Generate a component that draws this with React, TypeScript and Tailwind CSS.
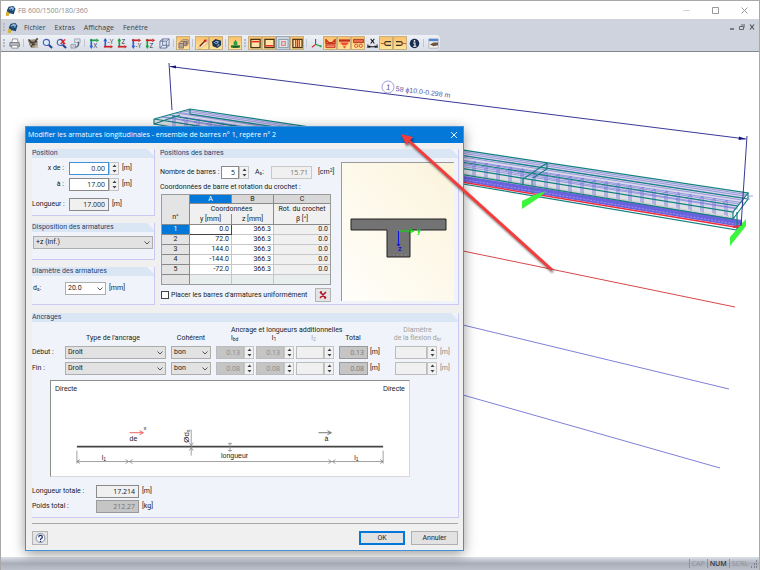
import React from 'react';

const coords = [
    { y: '0.0', z: '366.3', rot: '0.0' },
    { y: '72.0', z: '366.3', rot: '0.0' },
    { y: '144.0', z: '366.3', rot: '0.0' },
    { y: '-144.0', z: '366.3', rot: '0.0' },
    { y: '-72.0', z: '366.3', rot: '0.0' },
];

const anchors = [
    { label: 'Début :', type: 'Droit', bond: 'bon', lbd: '0.13', l1: '0.13', total: '0.13' },
    { label: 'Fin :', type: 'Droit', bond: 'bon', lbd: '0.08', l1: '0.08', total: '0.08' },
];

/* ---------- toolbar ---------- */

const Frame = ({ children }: { children: React.ReactNode }) => (
    <>
        <rect x="1" y="1.5" width="10" height="9" fill="#ffe3a8" stroke="#4a3418" strokeWidth="1.4" />
        {children}
    </>
);

const AxisIcon = ({ letter, flip, first, second }: { letter: string; flip: boolean; first: string; second: string }) => (
    <>
        <path d="M2.500 1v9" stroke={first} strokeWidth="1.800" />
        <path d={flip ? 'M1 9.500h7' : 'M1 2.500h7'} stroke={second} strokeWidth="1.800" />
        <path d={flip ? 'M8 7.500l3 2-3 2z' : 'M8 .5l3 2-3 2z'} fill={second} />
        <path d={flip ? 'M.5 3.500L2.500 0l2 3.500z' : 'M.5 8.500l2 3.500 2-3.500z'} fill={first} />
        <text x="5" y={flip ? 7 : 11} fontSize="7" fill="#1d3548">{letter}</text>
    </>
);

const icons: Record<string, React.ReactNode> = {
    print: (
        <>
            <path d="M3 5L4 1h5l1 4" fill="#fff" stroke="#777" strokeWidth=".8" />
            <path d="M1 5h10l.5 4H1z" fill="#b9bfc8" stroke="#555d68" strokeWidth=".8" />
            <path d="M3 8h6l1 3H3z" fill="#fff" stroke="#666" strokeWidth=".7" />
            <circle cx="9.500" cy="6.500" r=".8" fill="#e0a020" />
        </>
    ),
    render: (
        <>
            <path d="M1 2l9-1 1 9-7 1-3-4z" fill="#9c917f" />
            <path d="M1 2l9 8M10 1L3 10M2 5l8-1M1 1v3M9 1h2" stroke="#40372e" strokeWidth="1.200" />
            <path d="M7 8h4v3H8z" fill="#c5b9a4" />
        </>
    ),
    zoom: (
        <>
            <path d="M7 7l4 4" stroke="#27438e" strokeWidth="2.200" />
            <circle cx="4.800" cy="4.800" r="3.400" fill="#dcebfa" stroke="#4565b5" strokeWidth="1.300" />
        </>
    ),
    zoomx: (
        <>
            <path d="M7 7l4 4" stroke="#27438e" strokeWidth="2.200" />
            <circle cx="4.800" cy="4.800" r="3.400" fill="#dcebfa" stroke="#4565b5" strokeWidth="1.300" />
            <path d="M5 1.500l5 5M10 1.500l-5 5" stroke="#e02020" strokeWidth="1.500" />
        </>
    ),
    previous: (
        <>
            <path d="M1 7h5v4H1z" fill="#c6ccd6" stroke="#8d96a6" strokeWidth=".8" />
            <path d="M5 1h6v4H5z" fill="#dfe3ea" stroke="#8d96a6" strokeWidth=".8" />
            <path d="M9 4c1 3 0 6-3 6" fill="none" stroke="#56647b" strokeWidth="1.500" />
        </>
    ),
    viewX: <AxisIcon letter="X" flip={false} first="#2b62d0" second="#1ca040" />,
    viewYn: <AxisIcon letter="-Y" flip first="#2b62d0" second="#cc2222" />,
    viewZ: <AxisIcon letter="Z" flip first="#1ca040" second="#cc2222" />,
    viewY: <AxisIcon letter="-Y" flip={false} first="#2b62d0" second="#cc2222" />,
    viewZn: <AxisIcon letter="Z" flip={false} first="#1ca040" second="#cc2222" />,
    cube: <path d="M1 3.500l3-2.500h7v7L8 11H1zM1 3.500h7L11 1M8 3.500V11M4 1v7L1 11M4 8h7" fill="#e2e8f3" stroke="#5b6b92" strokeWidth=".9" />,
    blocks: (
        <>
            <path d="M1 6h5v5H1zM6 4h4v4H6z" fill="#b9a38e" stroke="#776a75" strokeWidth=".9" />
            <path d="M1 6l4-4h6v4L8 9M3 4h6v3" fill="none" stroke="#776a75" strokeWidth=".9" />
        </>
    ),
    redline: (
        <>
            <path d="M1 11L11 1v4L5 11z" fill="#fff0d8" stroke="#cda36a" strokeWidth=".7" />
            <path d="M3 9l6-6" stroke="#6b1b12" strokeWidth="1.300" />
            <circle cx="9" cy="3" r="1.500" fill="#d02018" />
        </>
    ),
    solid: (
        <>
            <path d="M1 4l4-3 6 2v5l-4 3-5-2z" fill="#1c3450" />
            <path d="M3 5l3-2 3 1-3 3zM7 8l2-2v2L7 9.500z" fill="#8fbbe0" />
            <path d="M4 5l2-1 1 1-1 1z" fill="#1c3450" />
        </>
    ),
    support: (
        <>
            <path d="M1 8h10v2.500H1z" fill="#1d7a35" />
            <path d="M4 8V5l2-3 2 3v3z" fill="#2c9c48" />
            <path d="M3 10h6" stroke="#0d421a" />
        </>
    ),
    topbar: <Frame><path d="M2 4h8" stroke="#e82a1c" strokeWidth="1.600" /></Frame>,
    botbar: <Frame><path d="M2 8.500h8" stroke="#e82a1c" strokeWidth="1.600" /></Frame>,
    stirrup: (
        <>
            <rect x="1" y="1.500" width="10" height="9" fill="#dce5ec" stroke="#8697a4" />
            <rect x="4" y="4" width="4" height="4" fill="none" stroke="#e88078" strokeWidth="1.300" />
        </>
    ),
    vbars: <Frame><path d="M4 2v8M6 2v8M8 2v8" stroke="#e82a1c" strokeWidth="1.300" /></Frame>,
    axes: (
        <>
            <path d="M5 1v6" stroke="#3a50c8" strokeWidth="1.200" />
            <path d="M5 7l6 2" stroke="#28a048" strokeWidth="1.300" />
            <path d="M5 7l-4 3" stroke="#d83030" strokeWidth="1.300" />
            <circle cx="10.500" cy="9" r="1.200" fill="#28a048" />
        </>
    ),
    load1: (
        <>
            <path d="M1 1v5h10V1M1 2l3 3h4l3-3" fill="none" stroke="#c8321f" strokeWidth="1.500" />
            <path d="M1 7.500h10v3H1z" fill="#f58a68" stroke="#c12b20" strokeWidth=".9" />
        </>
    ),
    load2: (
        <>
            <path d="M0 1.500h12v2.500H0z" fill="#c12b20" />
            <path d="M1 5h10L8 8H4z" fill="#ec4b36" />
            <path d="M4 9h4l-2 2.500z" fill="#ec4b36" />
        </>
    ),
    load3: (
        <>
            <path d="M.5 1.500h11V5H.5z" fill="#ec6a4d" stroke="#a63a22" strokeWidth="1" />
            <circle cx="3.500" cy="8.500" r="1.800" fill="none" stroke="#d04a30" />
            <circle cx="8.500" cy="8.500" r="1.800" fill="none" stroke="#d04a30" />
        </>
    ),
    dimension: (
        <>
            <path d="M4 1l4 5M8 1L4 6M5 3.500h2M1 7v4M11 7v4M1 9.500h10" stroke="#15151c" strokeWidth="1.100" />
            <path d="M1 9.500l2.500-1.500v3zM11 9.500L8.500 8v3z" fill="#15151c" />
        </>
    ),
    hookL: (
        <>
            <path d="M11 4H6a2 2 0 000 4h5" fill="none" stroke="#3d3327" strokeWidth="1.300" />
            <path d="M0 6h4" stroke="#e04428" />
        </>
    ),
    hookR: (
        <>
            <path d="M1 4h5a2 2 0 010 4H1" fill="none" stroke="#3d3327" strokeWidth="1.300" />
            <path d="M8 6h4" stroke="#e04428" />
        </>
    ),
    info: (
        <>
            <circle cx="6" cy="6" r="5.200" fill="#16294f" />
            <circle cx="6" cy="3.200" r="1" fill="#fff" />
            <path d="M4.500 5.500H6.500V9M4.500 9h3.500" stroke="#fff" strokeWidth="1.200" fill="none" />
        </>
    ),
    panel: (
        <>
            <rect x="1" y="1" width="10" height="10" fill="#f5f2ea" stroke="#8a94a6" strokeWidth=".6" />
            <path d="M1 1h10v2.500H1z" fill="#4f86dd" />
            <path d="M2 7l4-2h5v3l-5 1z" fill="#6d5443" />
        </>
    ),
};

const toolbar: { id: string; title: string; on?: 'warm' | 'cool' }[][] = [
    [{ id: 'print', title: 'Imprimer' }],
    [
        { id: 'render', title: 'Rendu' },
        { id: 'zoom', title: 'Zoom' },
        { id: 'zoomx', title: 'Zoom complet' },
        { id: 'previous', title: 'Vue précédente' },
    ],
    [
        { id: 'viewX', title: 'Vue X' },
        { id: 'viewYn', title: 'Vue -Y' },
        { id: 'viewZ', title: 'Vue Z' },
        { id: 'viewY', title: 'Vue Y' },
        { id: 'viewZn', title: 'Vue -Z' },
        { id: 'cube', title: 'Isométrie' },
    ],
    [{ id: 'blocks', title: 'Transparence', on: 'warm' }],
    [
        { id: 'redline', title: 'Armatures', on: 'warm' },
        { id: 'solid', title: 'Solide', on: 'warm' },
    ],
    [{ id: 'support', title: 'Appuis', on: 'warm' }],
];

const toolbarRight: typeof toolbar = [
    [
        { id: 'topbar', title: 'Armature supérieure', on: 'warm' },
        { id: 'botbar', title: 'Armature inférieure', on: 'warm' },
        { id: 'stirrup', title: 'Cadres', on: 'cool' },
        { id: 'vbars', title: 'Étriers', on: 'warm' },
    ],
    [
        { id: 'axes', title: 'Axes' },
        { id: 'load1', title: 'Enveloppe', on: 'warm' },
        { id: 'load2', title: 'Répartition', on: 'warm' },
        { id: 'load3', title: 'Sections', on: 'warm' },
        { id: 'dimension', title: 'Cotes' },
        { id: 'hookL', title: 'Crochet gauche', on: 'warm' },
        { id: 'hookR', title: 'Crochet droit', on: 'warm' },
        { id: 'info', title: 'Information' },
    ],
    [{ id: 'panel', title: 'Panneau' }],
];

const tone = {
    warm: 'bg-gradient-to-b from-[#fbc06a] to-[#ffe596] border-[#c9b083]',
    cool: 'bg-[#cfd8e0] border-[#9aa9b5]',
    none: 'border-transparent',
};

const ToolGroups = ({ groups }: { groups: typeof toolbar }) => (
    <div className="flex items-center">
        <div className="mx-[2px] h-2 border-l-2 border-dotted border-[#b4bac6]" />
        {groups.map((group, i) => (
            <div key={i} className="flex items-center">
                {i > 0 && <div className="mx-[2px] h-2 w-px bg-[#c0c6d0]" />}
                {group.map((t) => (
                    <button key={t.id} type="button" title={t.title} className={`flex h-[14px] w-[14px] items-center justify-center border ${tone[t.on ?? 'none']}`}>
                        <svg viewBox="0 0 12 12" className="h-[11px] w-[11px]">{icons[t.id]}</svg>
                    </button>
                ))}
            </div>
        ))}
    </div>
);

const Logo = () => (
    <svg viewBox="0 0 12 12" className="h-[11px] w-[11px]">
        <path d="M2 6l2-4 5-1 2.500 3-2 6-4-1-3 1z" fill="#1d4670" />
        <path d="M4 4l3-2 3 1-1 3-3 0z" fill="#8fb7dc" />
        <path d="M5 5l3-1-1 3z" fill="#1d4670" />
        <path d="M1 8l2-1 2 2-1 3H1z" fill="#d9b23a" />
    </svg>
);

/* ---------- form pieces ---------- */

const Group = ({ title, className = '', children }: { title: string; className?: string; children: React.ReactNode }) => (
    <fieldset className={`flex min-w-0 flex-col border-r border-b border-[#c9c9f3] bg-[#f0f4fa] ${className}`}>
        <legend className="contents">
            <span className="block h-[9px] bg-[#dbe6f4] text-[7px] leading-[9px] text-[#23436f] [clip-path:polygon(0_0,calc(100%-7px)_0,100%_7px,100%_100%,0_100%)]">{title}</span>
        </legend>
        {children}
    </fieldset>
);

const Field = ({ id, label, value = '', className = '', disabled = false, readOnly = false }: { id?: string; label?: string; value?: string; className?: string; disabled?: boolean; readOnly?: boolean }) => (
    <input
        id={id}
        aria-label={label}
        defaultValue={value}
        disabled={disabled}
        readOnly={readOnly}
        className={`min-w-0 border px-[3px] text-right font-['Open_Sans','Noto_Sans',sans-serif] text-[7px] leading-[10px] outline-none ${className}`}
    />
);

const Spin = ({ label }: { label: string }) => (
    <span className="flex w-[10px] flex-col border border-[#c4c4c4] bg-[#f2f2f2]">
        <button type="button" aria-label={`${label} plus`} className="flex flex-1 items-center justify-center">
            <svg viewBox="0 0 5 3" className="h-[3px] w-[5px]"><path d="M.5 3l2-2.500 2 2.500z" fill="#444" /></svg>
        </button>
        <button type="button" aria-label={`${label} moins`} className="flex flex-1 items-center justify-center">
            <svg viewBox="0 0 5 3" className="h-[3px] w-[5px]"><path d="M.5 0l2 2.500 2-2.500z" fill="#444" /></svg>
        </button>
    </span>
);

const Select = ({ id, label, value, className }: { id?: string; label?: string; value: string; className: string }) => (
    <div className={`relative h-[13px] ${className}`}>
        <select id={id} aria-label={label} defaultValue={value} className="block h-full w-full appearance-none border border-[#adadad] bg-inherit pl-[2px] text-[7px] leading-[11px] outline-none">
            <option>{value}</option>
        </select>
        <svg viewBox="0 0 6 4" className="pointer-events-none absolute top-[5px] right-[3px] h-[4px] w-[6px]">
            <path d="M.5.5L3 3 5.500.500" fill="none" stroke="#444" strokeWidth=".9" />
        </svg>
    </div>
);

const SpinField = ({ label, value = '', width, grey = false }: { label: string; value?: string; width: string; grey?: boolean }) => (
    <div className={`flex h-[13px] ${width}`}>
        <Field label={label} value={value} disabled className={`flex-1 border-[#bcbcbc] text-[#8a8a8a] ${grey ? 'bg-[#c5c5c5]' : 'bg-[#f0f0f0]'}`} />
        <Spin label={label} />
    </div>
);

/* ---------- drawings ---------- */

const along = (x: number, x1: number, y1: number, x2: number, y2: number) => y1 + ((x - x1) * (y2 - y1)) / (x2 - x1);

const Model = () => {
    const stirrups = Array.from({ length: 47 }, (_, i) => 175 + i * 12);
    return (
        <svg viewBox="1 52 758 503" preserveAspectRatio="xMinYMin meet" className="block w-full" role="img" aria-label="Modèle 3D de la poutre">
            <polygon points="154,119 190,109 748,193 733,212" fill="#d9d9e8" />
            <polygon points="154,119 733,212 733,219 154,124" fill="#dedee6" />
            <polygon points="190,135 733,219 737,222 463,178 190,133" fill="#c9c9cc" />
            <polygon points="300,146 733,217 740,223 300,153" fill="#cfcfd0" />
            <polygon points="300,150 742,220 741,227 300,155" fill="#6a62dc" />
            <path d="M300 152.500L741 225" stroke="#a49cf4" strokeWidth=".8" strokeDasharray="2 1.500" />
            <path d="M300 155.500L741 228" stroke="#ee2c3c" strokeWidth="1.500" />
            <g stroke="#6b6bd6" strokeWidth=".6">
                <path d="M187 110L747 194.500M183 111L745 196M180 112.500L744 198M176 113L742 200M169 115L739 204M165 117L737 206M162 117L736 208" />
                <path d="M180 117L744 203M168 121L738 209" />
            </g>
            <g stroke="#7272da" strokeWidth=".8" fill="none">
                {stirrups.map((x) => {
                    const top = along(x, 154, 112, 740, 202);
                    return <path key={x} d={`M${x - 5} ${top + 4}l5-4v16M${x - 2} ${top + 4}v11`} />;
                })}
            </g>
            <g stroke="#128080" strokeWidth="1.200" fill="none">
                <path d="M154 119L190 109L748 193L733 212Z" />
                <path d="M154 119V124L733 219V212M748 193V199L733 219" />
                <path d="M190 109V114L748 199M172 116L738 206" />
                <path d="M547 163L523 179V185M547 163V169L533 178M154 124L180 115" />
                <path d="M463 184L737 230V212" />
            </g>
            <path d="M737 230l5-8" stroke="#5a2ab0" />
            <path d="M733 227l9-1" stroke="#ee2c3c" strokeWidth="2" />
            <path d="M748 196h5M746 199h4" stroke="#8a8ae0" strokeWidth=".8" />
            <path d="M532 180v14" stroke="#4a7a90" />
            <polygon points="522,201 534,195 546,191 540,197 522,209" fill="#3df53d" />
            <polygon points="730,237 746,219 746,226 730,246" fill="#3df53d" />

            <g stroke="#23238c" strokeWidth=".9" fill="none">
                <path d="M170 66.500L746 139" />
                <path d="M169 63L172 110M747 136L741 226" />
            </g>
            <path d="M170 66.500l6-1v3zM746 139l-7-2.500-.5 3.500z" fill="#15157c" />
            <g transform="translate(388 87) rotate(7)" fontFamily="Liberation Sans" fill="#5454a8" fontSize="8">
                <circle r="6" fill="#fff" stroke="#8a8ad0" strokeWidth=".8" />
                <text x="-2" y="3">1</text>
                <text x="8" y="3" fontSize="7">58 ϕ10.0-0.298 m</text>
            </g>

            <path d="M463 251L735 307" stroke="#d84848" strokeWidth="1" />
            <path d="M463 325L729 389M463 395L720 468" stroke="#8080d8" strokeWidth="1" />
        </svg>
    );
};

const Section = () => (
    <svg viewBox="0 0 112 138" className="h-full w-full" role="img" aria-label="Section en T">
        <defs>
            <linearGradient id="cream" x1="1" y1="0" x2="0" y2="1">
                <stop offset="0" stopColor="#fbf4dc" />
                <stop offset="1" stopColor="#fffefa" />
            </linearGradient>
        </defs>
        <rect width="112" height="138" fill="url(#cream)" />
        <path d="M9 56H104V67H68V94H45V67H9Z" fill="#737373" stroke="#222" />
        <path d="M47 92H67" stroke="#8888ee" strokeDasharray="1 3" />
        <path d="M57 68H71M68 66l4 2-4 2" stroke="#00e800" fill="none" />
        <path d="M56.500 68V83M55 81l1.500 2 1.500-2" stroke="#1414e0" fill="none" />
        <text x="75" y="70" fontSize="7" fontWeight="bold" fill="#00e800">y</text>
        <text x="56" y="88" fontSize="7" fontWeight="bold" fill="#1414e0">z</text>
    </svg>
);

const AnchorSketch = () => (
    <svg viewBox="0 0 360 96" className="block w-full" fontSize="7" fill="#1a1a1a" fontFamily="Liberation Sans" role="img" aria-label="Schéma des ancrages">
        <text x="4" y="10">Directe</text>
        <text x="356" y="10" textAnchor="end">Directe</text>
        <path d="M26 66H334" stroke="#454545" strokeWidth="2" />
        <g stroke="#888" strokeWidth=".8" fill="none">
            <path d="M26 81H334M26 70V83M334 70V83" />
            <path d="M29 79l-3 2 3 2M75 79l3 2-3 2M82 79l-3 2 3 2M279 79l3 2-3 2M286 79l-3 2 3 2M331 79l3 2-3 2" />
            <path d="M141 49V75M139 62l2 3 2-3M139 70l2-3 2 3M180 62V71M178 63h4M178 70h4" />
        </g>
        <path d="M79 52H92M89 50l4 2-4 2" stroke="#f06060" fill="none" />
        <path d="M269 52H281M278 50l4 2-4 2" stroke="#555" fill="none" strokeWidth=".8" />
        <text x="93" y="49" fontSize="6">x</text>
        <text x="79" y="60">de</text>
        <text x="275" y="60">à</text>
        <text x="51" y="79">l<tspan fontSize="5" dy="1">1</tspan></text>
        <text x="305" y="79">l<tspan fontSize="5" dy="1">1</tspan></text>
        <text x="171" y="77">longueur</text>
        <text transform="translate(139 62) rotate(-90)" fontSize="8">Ød<tspan fontSize="5" dy="1">s</tspan></text>
    </svg>
);

/* ---------- dialog ---------- */

const Dialog = () => (
    <form className="absolute top-[74px] left-[24px] flex w-[439px] flex-col border border-[#3f92d6] bg-[#f0f0f0] font-[Roboto,'Noto_Sans',sans-serif] shadow-[0_3px_12px_rgba(0,0,0,0.4)]" onSubmit={(e) => e.preventDefault()}>
        <header className="flex h-4 items-center justify-between bg-[#0378d8] pr-[5px] pl-[2px] text-white">
            <h1 className="font-['Open_Sans','Noto_Sans',sans-serif] text-[7px] leading-[10px]">Modifier les armatures longitudinales - ensemble de barres n° 1, repère n° 2</h1>
            <button type="button" aria-label="Fermer">
                <svg viewBox="0 0 8 8" className="h-2 w-2"><path d="M1 1l6 6M7 1L1 7" stroke="#fff" strokeWidth=".9" /></svg>
            </button>
        </header>

        <div className="flex flex-col gap-2 pt-[6px] pr-[4px] pl-[6px]">
            <div className="flex gap-[5px]">
                {/* Left column */}
                <div className="flex w-[123px] flex-col gap-[7px]">
                    <Group title="Position">
                        <div className="grid grid-cols-[37px_40px_auto_1fr] items-center pt-1 pb-[4px]">
                            <label htmlFor="x-from" className="pr-[5px] text-right">x de :</label>
                            <Field id="x-from" value="0.00" className="h-[13px] border-[#3f92d6] bg-white" />
                            <div className="flex h-[13px]"><Spin label="x de" /></div>
                            <span className="pl-[3px]">[m]</span>
                            <label htmlFor="x-to" className="mt-[3px] pr-[5px] text-right">à :</label>
                            <Field id="x-to" value="17.00" className="mt-[3px] h-[13px] border-[#8a8a8a] bg-white" />
                            <div className="mt-[3px] flex h-[13px]"><Spin label="à" /></div>
                            <span className="mt-[3px] pl-[3px]">[m]</span>
                            <label htmlFor="length" className="mt-[7px] whitespace-nowrap">Longueur :</label>
                            <Field id="length" value="17.000" readOnly className="mt-[7px] h-[13px] border-[#8a8a8a] bg-[#f0f0f0]" />
                            <span className="col-span-2 mt-[7px] pl-[3px]">[m]</span>
                        </div>
                    </Group>
                    <Group title="Disposition des armatures">
                        <Select label="Disposition des armatures" value="+z (inf.)" className="mx-[1px] mt-1 mb-[10px] bg-[#e2e2e2]" />
                    </Group>
                    <Group title="Diamètre des armatures">
                        <div className="flex items-center pt-[6px] pb-[9px]">
                            <label htmlFor="diameter" className="w-[33px] pl-[1px]">d<sub className="text-[5px]">s</sub>:</label>
                            <Select id="diameter" value="20.0" className="w-[41px] bg-white" />
                            <span className="pl-[3px]">[mm]</span>
                        </div>
                    </Group>
                </div>

                {/* Bar positions */}
                <Group title="Positions des barres" className="flex-1">
                    <div className="flex flex-1 justify-between pt-1 pr-[4px] pb-[2px]">
                        <div className="flex w-[177px] flex-col pt-1">
                            <div className="flex h-[13px] items-center">
                                <label htmlFor="bar-count" className="w-[61px] whitespace-nowrap">Nombre de barres :</label>
                                <Field id="bar-count" value="5" className="h-full w-[18px] border-[#8a8a8a] bg-white" />
                                <div className="flex h-full"><Spin label="Nombre" /></div>
                                <label htmlFor="area" className="w-[22px] pl-[6px]">A<sub className="text-[5px]">s</sub>:</label>
                                <Field id="area" value="15.71" disabled className="h-full w-[41px] border-[#c8c8c8] bg-[#f0f0f0] text-[#777]" />
                                <span className="pl-[6px]">[cm<sup className="text-[5px]">2</sup>]</span>
                            </div>
                            <p className="mt-[4px] mb-[2px] whitespace-nowrap">Coordonnées de barre et rotation du crochet :</p>
                            <table className="ml-[1px] w-[170px] table-fixed border-separate border-spacing-0 border border-[#9a9a9a] bg-white text-[7px] leading-[9px]">
                                <colgroup>
                                    <col className="w-[28px]" />
                                    <col className="w-[42px]" />
                                    <col className="w-[42px]" />
                                    <col />
                                </colgroup>
                                <thead className="bg-[#f0f0f0]">
                                    <tr className="leading-[8px]">
                                        <th rowSpan={3} className="border-r border-b border-[#8a8a8a] bg-[#e4e4e4] pb-[3px] align-bottom font-normal">n°</th>
                                        <th className="border-r border-b border-[#8a8a8a] bg-[#0378d8] font-normal text-white">A</th>
                                        <th className="border-r border-b border-[#8a8a8a] bg-[#d8d8d8] font-normal">B</th>
                                        <th className="border-b border-[#8a8a8a] bg-[#d8d8d8] font-normal">C</th>
                                    </tr>
                                    <tr className="leading-[10px] whitespace-nowrap">
                                        <th colSpan={2} className="border-r border-[#8a8a8a] font-normal">Coordonnées</th>
                                        <th className="font-normal">Rot. du crochet</th>
                                    </tr>
                                    <tr className="leading-[10px]">
                                        <th className="border-r border-b border-[#8a8a8a] font-normal">y [mm]</th>
                                        <th className="border-r border-b border-[#8a8a8a] font-normal">z [mm]</th>
                                        <th className="border-b border-[#8a8a8a] font-normal">β [°]</th>
                                    </tr>
                                </thead>
                                <tbody>
                                    {coords.map((c, i) => (
                                        <tr key={i} className="text-right">
                                            <th className={`border-r border-b border-[#8a8a8a] text-center font-normal ${i === 0 ? 'bg-[#0378d8] text-white' : 'bg-[#e4e4e4]'}`}>{i + 1}</th>
                                            <td className={`border-r border-b pr-[2px] ${i === 0 ? 'border-[#444]' : 'border-[#c6c6c6]'}`}>{c.y}</td>
                                            <td className="border-r border-b border-[#c6c6c6] pr-[2px]">{c.z}</td>
                                            <td className="border-b border-[#c6c6c6] bg-[#f0f0f0] pr-[2px]">{c.rot}</td>
                                        </tr>
                                    ))}
                                    <tr className="h-[9px] bg-[#e8eeee]">
                                        <td className="border-r border-[#8a8a8a] bg-[#e4e4e4]" />
                                        <td className="border-r border-[#c6c6c6]" />
                                        <td className="border-r border-[#c6c6c6]" />
                                        <td />
                                    </tr>
                                </tbody>
                            </table>
                            <div className="mt-[3px] flex items-center justify-between pr-[6px]">
                                <label className="flex items-center gap-[2px] whitespace-nowrap">
                                    <input type="checkbox" className="ml-[1px] h-2 w-2 appearance-none border border-[#444] bg-white" />
                                    Placer les barres d'armatures uniformément
                                </label>
                                <button type="button" aria-label="Supprimer" className="flex h-[14px] w-4 items-center justify-center border border-[#b4b4b4] bg-[#e4e4e4]">
                                    <svg viewBox="0 0 8 8" className="h-2 w-2"><path d="M1 1l6 6M7 1L1 7M1 1h2M5 7h2" stroke="#b01c2c" strokeWidth="1.700" /></svg>
                                </button>
                            </div>
                        </div>
                        <div className="h-[139px] w-[113px] border-t border-l border-[#9a9a9a]"><Section /></div>
                    </div>
                </Group>
            </div>

            {/* Anchorage */}
            <Group title="Ancrages">
                <div className="pt-[4px] pb-[4px]">
                    <div className="grid grid-cols-[33px_106px_45px_40px_40px_43px_31px_25px_45px_1fr] items-center leading-[8px] whitespace-nowrap">
                        <span className="col-start-4 col-end-7 pl-[15px]">Ancrage et longueurs additionnelles</span>
                        <span className="col-start-9 text-center text-[#a0a0a0]">Diamètre</span>
                        <span className="col-start-2 pr-[10px] text-center">Type de l'ancrage</span>
                        <span className="pr-[5px] text-center">Cohérent</span>
                        <span className="pl-[15px]">l<sub className="text-[5px] leading-none">bd</sub></span>
                        <span className="pr-1 text-center">l<sub className="text-[5px] leading-none">1</sub></span>
                        <span className="pr-2 text-center text-[#a0a0a0]">l<sub className="text-[5px] leading-none">2</sub></span>
                        <span className="pr-[3px] text-center">Total</span>
                        <span className="col-start-9 flex justify-center text-[#a0a0a0]"><span>de la flexion d<sub className="text-[5px] leading-none">br</sub></span></span>
                    </div>
                    <div className="mt-[4px] flex flex-col gap-[3px]">
                        {anchors.map((a) => (
                            <div key={a.label} className="grid grid-cols-[33px_106px_45px_40px_40px_43px_31px_25px_45px_1fr] items-center">
                                <span>{a.label}</span>
                                <Select label={`${a.label} type de l'ancrage`} value={a.type} className="w-[101px] bg-[#e2e2e2]" />
                                <Select label={`${a.label} cohérent`} value={a.bond} className="w-[40px] bg-[#e2e2e2]" />
                                <SpinField label={`${a.label} lbd`} value={a.lbd} width="w-[38px]" grey />
                                <SpinField label={`${a.label} l1`} value={a.l1} width="w-[38px]" grey />
                                <SpinField label={`${a.label} l2`} width="w-[38px]" />
                                <Field label={`${a.label} total`} value={a.total} disabled className="h-[13px] w-[29px] border-[#9a9a9a] bg-[#c5c5c5] text-[#777]" />
                                <span>[m]</span>
                                <SpinField label={`${a.label} diamètre de la flexion`} width="w-[42px]" />
                                <span className="text-[#888]">[m]</span>
                            </div>
                        ))}
                    </div>
                    <div className="mt-[5px] mr-12 ml-[18px] border border-t-[#8a8f8a] border-r-[#d8d8d8] border-b-[#d8d8d8] border-l-[#8a8f8a] bg-white">
                        <AnchorSketch />
                    </div>
                    <div className="mt-2 grid grid-cols-[64px_43px_auto] items-center gap-y-[2px]">
                        <label htmlFor="total-length">Longueur totale :</label>
                        <Field id="total-length" value="17.214" readOnly className="h-[13px] border-[#8a8a8a] bg-[#f0f0f0]" />
                        <span className="pl-[3px]">[m]</span>
                        <label htmlFor="total-weight">Poids total :</label>
                        <Field id="total-weight" value="212.27" disabled className="h-[13px] border-[#9a9a9a] bg-[#c5c5c5] text-[#777]" />
                        <span className="pl-[3px]">[kg]</span>
                    </div>
                </div>
            </Group>
        </div>

        <footer className="mr-[5px] ml-[6px] mt-[5px] flex items-center gap-[6px] border-t border-[#a8a8a8] pt-[7px] pb-[5px]">
            <button type="button" aria-label="Aide" className="mr-auto flex h-[14px] w-4 items-center justify-center border border-[#b4b4b4] bg-[#e4e4e4]">
                <svg viewBox="0 0 12 12" className="h-[11px] w-[11px]">
                    <circle cx="6" cy="5.500" r="4.800" fill="#fafbff" stroke="#75809a" />
                    <path d="M4 4.500c0-2.500 4-2.500 4 0C8 6 6 5.500 6 7.500M6 8.500v1.300" fill="none" stroke="#22336a" strokeWidth="1.400" />
                </svg>
            </button>
            <button type="submit" className="h-[14px] w-[46px] border-2 border-[#0378d8] bg-[#e2e2e2] leading-[10px]">OK</button>
            <button type="button" className="h-[14px] w-[47px] border border-[#b0b0b0] bg-[#e2e2e2] leading-[10px]">Annuler</button>
        </footer>
    </form>
);

export default function App() {
    return (
        <div className="relative flex min-h-screen flex-col overflow-hidden border-t border-r border-l border-[#a8a8a8] bg-white font-['Open_Sans','Noto_Sans',sans-serif] text-[7px] leading-[9px] text-[#1a1a1a]">
            {/* Window title */}
            <header className="flex h-[18px] items-center gap-[2px] pr-[11px] pl-[4px]">
                <Logo />
                <span className="text-[#8c8c8c]">FB 600/1500/180/360</span>
                <div className="ml-auto flex items-center gap-[22px]">
                    <button type="button" aria-label="Réduire"><svg viewBox="0 0 7 7" className="h-[7px] w-[7px]"><path d="M0 3.500h7" stroke="#d4d4d4" /></svg></button>
                    <button type="button" aria-label="Agrandir"><svg viewBox="0 0 7 7" className="h-[7px] w-[7px]"><path d="M.5.5h6v6h-6z" fill="none" stroke="#999" /></svg></button>
                    <button type="button" aria-label="Quitter"><svg viewBox="0 0 7 7" className="h-[7px] w-[7px]"><path d="M.5.5l6 6M6.500.5l-6 6" stroke="#999" /></svg></button>
                </div>
            </header>

            <nav className="flex h-4 items-center gap-[9px] bg-[#cfd3dd] pr-1 pl-[2px] text-[#3c3f46]">
                <div className="flex items-center gap-[2px]">
                    <div className="h-2 border-l-2 border-dotted border-[#b4bac6]" />
                    <Logo />
                    <button type="button" className="ml-[4px]">Fichier</button>
                </div>
                <button type="button">Extras</button>
                <button type="button">Affichage</button>
                <button type="button">Fenêtre</button>
                <div className="ml-auto flex items-center gap-1">
                    <button type="button" aria-label="Réduire la vue"><svg viewBox="0 0 6 6" className="h-[6px] w-[6px]"><path d="M1 5h4" stroke="#555" strokeWidth="1.400" /></svg></button>
                    <button type="button" aria-label="Restaurer la vue"><svg viewBox="0 0 6 6" className="h-[6px] w-[6px]"><path d="M2 1h4v3M.5 2.500h4v3h-4z" fill="none" stroke="#666" /></svg></button>
                    <button type="button" aria-label="Fermer la vue"><svg viewBox="0 0 6 6" className="h-[6px] w-[6px]"><path d="M1 .5l4 5M5 .5l-4 5" stroke="#555" strokeWidth="1.200" /></svg></button>
                </div>
            </nav>

            <div className="flex h-[17px] items-center border-b border-[#84878e] bg-[#cfd3dd]">
                <div className="flex h-full items-center rounded-r-sm bg-gradient-to-b from-[#eef1f6] to-[#d9dde6]">
                    <ToolGroups groups={toolbar} />
                    <ToolGroups groups={toolbarRight} />
                </div>
            </div>

            {/* Work area */}
            <main className="relative min-h-[505px] flex-1">
                <Model />
                <Dialog />
                <svg viewBox="1 52 758 503" preserveAspectRatio="xMinYMin meet" className="pointer-events-none absolute top-0 left-0 w-full drop-shadow-[1px_2px_1px_rgba(0,0,0,0.5)]">
                    <path d="M552 270L409 141" stroke="#f43c3c" strokeWidth="3" />
                    <polygon points="401,134 413,137 406,145" fill="#f43c3c" />
                </svg>
            </main>

            <footer className="flex h-[13px] items-center justify-end gap-[2px] bg-gradient-to-b from-[#dde1e8] via-[#a9aeba] to-[#bcc1cb] pr-px text-[#8d929c]">
                <span className="border-l border-[#8d929c] pl-[2px]">CAP</span>
                <span className="border-l border-[#8d929c] pl-[2px] font-semibold text-[#33363c]">NUM</span>
                <span className="border-l border-[#8d929c] pl-[2px]">SCRL</span>
                <svg viewBox="0 0 8 8" className="h-2 w-2"><path d="M6 1h1M4 4h1M6 4h1M1 7h1M4 7h1M6 7h1" stroke="#6d727c" strokeWidth="1.400" /></svg>
            </footer>
        </div>
    );
}
